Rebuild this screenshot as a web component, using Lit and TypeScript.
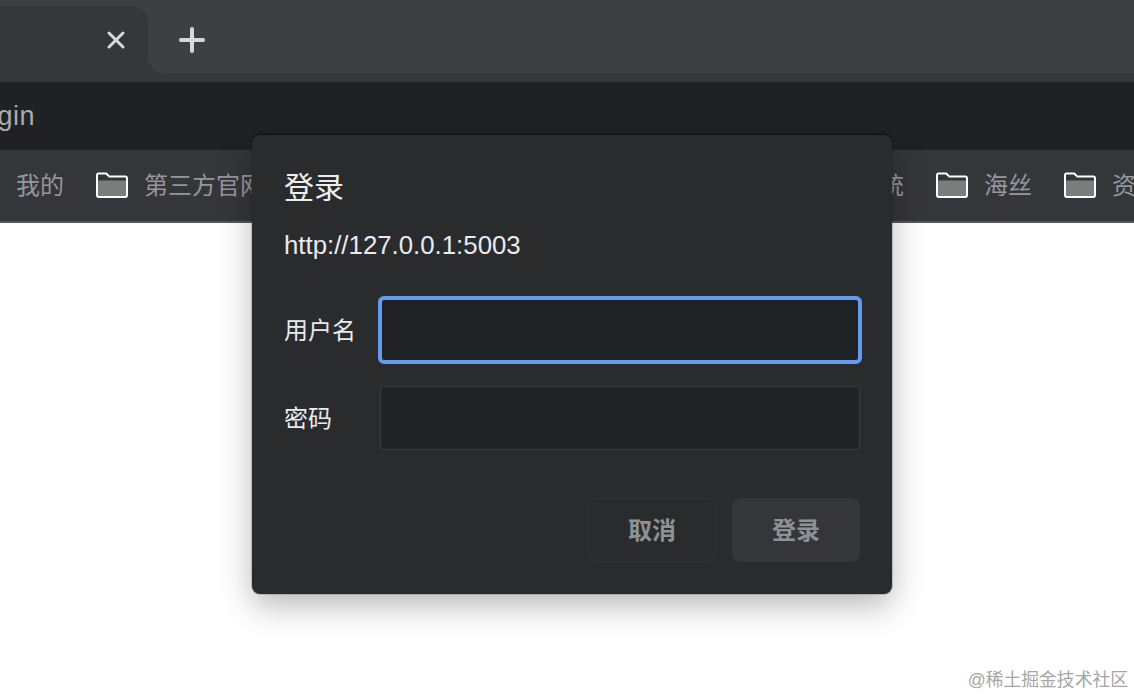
import { html, css, LitElement, svg } from 'lit'
import { customElement } from 'lit/decorators.js'

const folder = html`<svg class="folder" width="32" height="26" viewBox="0 0 32 26">
  ${svg`<path d="M2 8.500h28v15.500H2z" fill="#7b7c7e" />
  <path d="M1 3a1.500 1.500 0 0 1 1.500-1.500h7.800l3 3.100h16.200A1.500 1.500 0 0 1 31 6.100v17.400A1.500 1.500 0 0 1 29.500 25h-27A1.500 1.500 0 0 1 1 23.500z" fill="none" stroke="#fff" stroke-width="2" stroke-linejoin="round" />`}
</svg>`

@customElement('app-root')
export class AppRoot extends LitElement {
  render() {
    return html`
      <div class="strip">
        <div class="tab-wrap">
          <div class="tab">
            <svg width="18" height="18" viewBox="0 0 18 18">
              <path d="M2 2l14 14M16 2L2 16" stroke="#d6d9db" stroke-width="3" stroke-linecap="round" />
            </svg>
          </div>
        </div>
        <div class="strip-rest">
          <svg width="26" height="26" viewBox="0 0 26 26">
            <path d="M13 2v22M2 13h22" stroke="#d6d9db" stroke-width="4" stroke-linecap="round" />
          </svg>
        </div>
      </div>
      <div class="toolbar"><div class="url"><span>login</span></div></div>
      <div class="bookmarks">
        <span class="mark"><span class="label">我的</span></span>
        <span class="mark">${folder}<span class="label">第三方官网</span></span>
        <span class="gap"></span>
        <span class="mark"><span class="label">系统</span></span>
        <span class="mark">${folder}<span class="label">海丝</span></span>
        <span class="mark">${folder}<span class="label">资源</span></span>
      </div>
      <div class="page"></div>
      <div class="dialog">
        <div class="title">登录</div>
        <div class="origin">http://127.0.0.1:5003</div>
        <div class="fields">
          <label class="field"><span class="name">用户名</span><span class="input focus"></span></label>
          <label class="field"><span class="name">密码</span><span class="input"></span></label>
        </div>
        <div class="actions">
          <span class="btn cancel">取消</span>
          <span class="btn primary">登录</span>
        </div>
      </div>
      <div class="mark-water">@稀土掘金技术社区</div>
    `
  }

  static styles = [
    css`
      :host {
        display: flex;
        flex-direction: column;
        position: relative;
        width: 1134px;
        height: 696px;
        overflow: hidden;
        background: #fff;
        font-family: 'Liberation Sans', 'Noto Sans CJK SC', sans-serif;
      }

      .strip {
        display: flex;
        height: 82px;
        flex: none;
        background: #36373a;
      }

      .tab-wrap {
        width: 148px;
        background: #3d4043;
      }

      .tab {
        display: flex;
        align-items: center;
        justify-content: flex-end;
        box-sizing: border-box;
        height: 76px;
        margin-top: 6px;
        padding: 0 23px 8px 0;
        background: #36373a;
        border-top-right-radius: 16px;
      }

      .strip-rest {
        flex: 1;
        display: flex;
        align-items: center;
        height: 73px;
        padding: 7px 0 0 31px;
        box-sizing: border-box;
        background: #3d4043;
        border-bottom-left-radius: 16px;
      }

      .toolbar {
        flex: none;
        height: 68px;
        display: flex;
        align-items: center;
        background: #202124;
      }

      .url {
        display: flex;
        justify-content: flex-end;
        width: 35px;
        overflow: hidden;
        color: #a9abad;
        font-size: 27px;
        letter-spacing: 0.5px;
      }

      .bookmarks {
        flex: none;
        display: flex;
        align-items: center;
        gap: 32px;
        box-sizing: border-box;
        height: 73px;
        padding: 0 0 1px 16px;
        overflow: hidden;
        white-space: nowrap;
        background: #35363a;
        border-bottom: 2px solid #55565a;
        color: #94979a;
        font-size: 24px;
        line-height: 30px;
      }

      .mark {
        flex: none;
        display: flex;
        align-items: center;
        gap: 16px;
      }

      .label {
        display: block;
        padding-top: 2px;
      }

      .gap {
        flex: none;
        width: 528px;
      }

      .folder {
        display: block;
        flex: none;
      }

      .page {
        flex: 1;
        background: #fff;
      }

      .dialog {
        position: absolute;
        left: 252px;
        top: 134px;
        box-sizing: border-box;
        width: 640px;
        height: 460px;
        padding: 32px;
        background: #2a2b2d;
        border-radius: 8px;
        border-top: 1px solid #0e0e10;
        box-shadow: 0 0 0 1px rgba(0, 0, 0, 0.15), 0 12px 32px rgba(0, 0, 0, 0.28);
        color: #e8eaed;
      }

      .title {
        font-size: 30px;
        line-height: 42px;
        color: #eceef0;
      }

      .origin {
        margin-top: 20px;
        font-size: 25.800px;
        line-height: 32px;
      }

      .fields {
        display: flex;
        flex-direction: column;
        gap: 24px;
        margin-top: 37px;
      }

      .field {
        display: flex;
        align-items: center;
        font-size: 24px;
      }

      .name {
        width: 96px;
        flex: none;
        padding-bottom: 4px;
      }

      .input {
        flex: 1;
        box-sizing: border-box;
        height: 64px;
        background: #212225;
        border: 1px solid #3c3d40;
        border-radius: 4px;
      }

      .input.focus {
        height: 68px;
        margin: -2px;
        border: 4px solid #649af0;
        border-radius: 6px;
      }

      .actions {
        display: flex;
        justify-content: flex-end;
        gap: 16px;
        margin-top: 48px;
      }

      .btn {
        display: flex;
        align-items: center;
        justify-content: center;
        box-sizing: border-box;
        width: 128px;
        height: 64px;
        padding-bottom: 4px;
        border-radius: 8px;
        font-size: 24px;
        font-weight: 700;
        color: #8f9295;
      }

      .cancel {
        border: 1px solid #323336;
      }

      .primary {
        background: #35363a;
      }

      .mark-water {
        position: absolute;
        right: 6px;
        bottom: 5px;
        font-size: 17.800px;
        line-height: 22px;
        color: #a6a6a6;
      }
    `,
  ]
}

declare global {
  interface HTMLElementTagNameMap {
    'app-root': AppRoot
  }
}
